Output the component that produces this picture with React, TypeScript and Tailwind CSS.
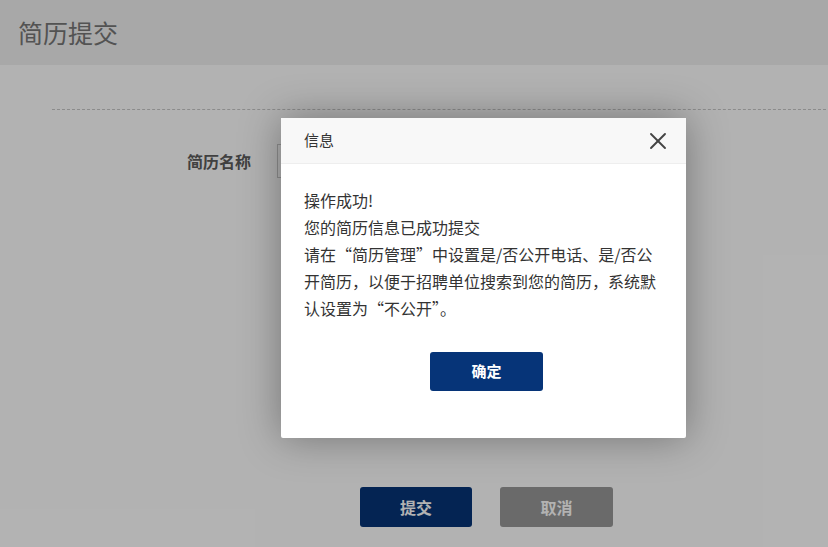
import { X } from 'lucide-react'

const lines = [
  '操作成功!',
  '您的简历信息已成功提交',
  '请在“简历管理”中设置是/否公开电话、是/否公',
  '开简历，以便于招聘单位搜索到您的简历，系统默',
  '认设置为“不公开”。',
]

export default function App() {
  return (
    <div className="relative h-[547px] w-full overflow-hidden bg-white font-['Noto_Sans_CJK_SC','Noto_Sans',sans-serif]">
      {/* page header */}
      <div className="flex h-[65px] items-center bg-[#f1f1f1] pl-[18px]">
        <h1 className="text-[25px] leading-none text-[#777]">简历提交</h1>
      </div>

      {/* form */}
      <div className="pl-[52px] pr-[2px] pt-[44px]">
        <div className="border-t border-dashed border-[#c8c8c8]" />
        <div className="mt-[34px] flex items-center pl-[135px]">
          <label className="w-[90px] text-[16px] font-bold text-[#5c5c5c]">简历名称</label>
          <div className="h-[34px] w-[300px] border border-[#cccccc] bg-white" />
        </div>
        <div className="mt-[309px] flex gap-[28px] pl-[308px]">
          <button className="h-[40px] w-[112px] rounded-[3px] bg-[#063478] text-[16px] font-bold text-white">
            提交
          </button>
          <button className="h-[40px] w-[113px] rounded-[3px] bg-[#989898] text-[16px] font-bold text-white">
            取消
          </button>
        </div>
      </div>

      {/* modal overlay */}
      <div className="absolute inset-0 bg-black/30">
        <div className="absolute left-[281px] top-[118px] w-[405px] rounded-[2px] bg-white shadow-[0_0_40px_rgba(0,0,0,0.35)]">
          <div className="flex h-[46px] items-center justify-between border-b border-[#eeeeee] bg-[#f8f8f8] pl-[23px] pr-[14px]">
            <span className="text-[15px] text-[#333]">信息</span>
            <X className="h-[28px] w-[28px] text-[#444]" strokeWidth={1.6} />
          </div>
          <div className="px-[23px] pb-[47px] pt-[23px]">
            <div className="text-[16px] leading-[27px] text-[#333]">
              {lines.map((l) => (
                <div key={l} className="whitespace-nowrap">
                  {l}
                </div>
              ))}
            </div>
            <div className="mt-[30px] flex justify-center pl-[6px]">
              <button className="h-[39px] w-[113px] rounded-[3px] bg-[#063478] text-[15px] font-bold text-white">
                确定
              </button>
            </div>
          </div>
        </div>
      </div>
    </div>
  )
}
